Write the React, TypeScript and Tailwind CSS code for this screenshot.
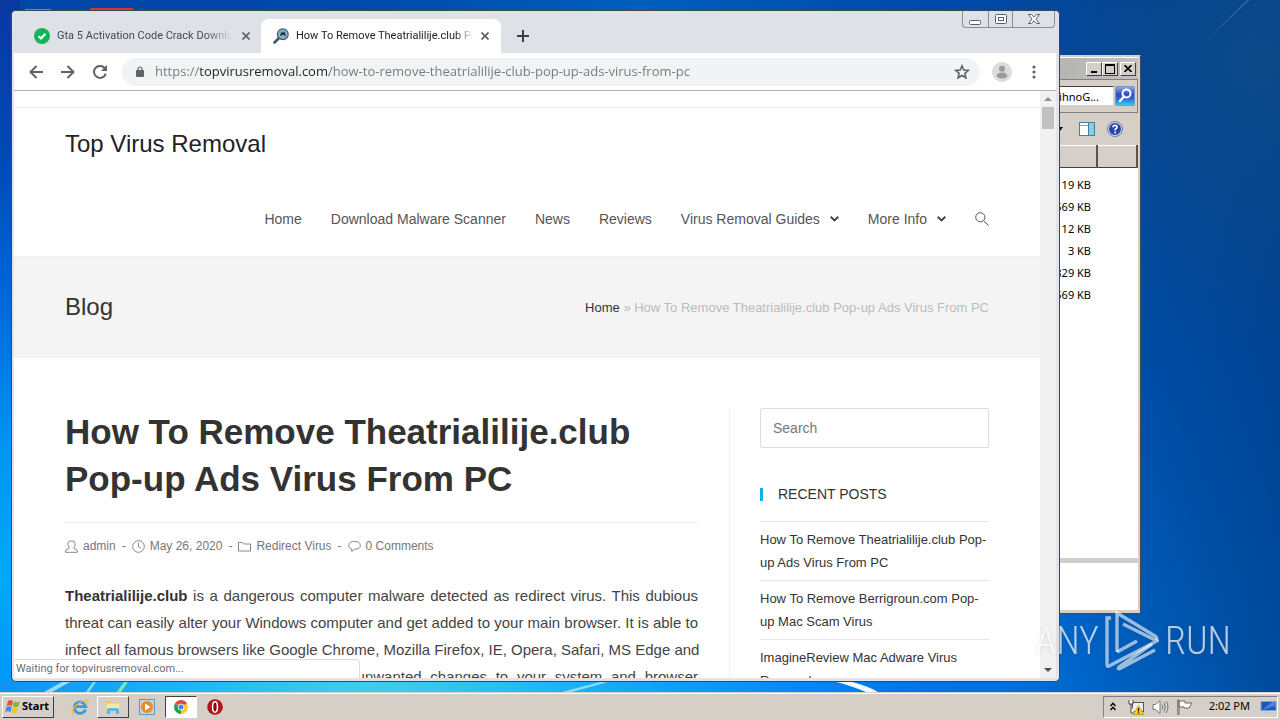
import type { ReactNode } from "react";

const navLinks = [
    { name: "Home", menu: false },
    { name: "Download Malware Scanner", menu: false },
    { name: "News", menu: false },
    { name: "Reviews", menu: false },
    { name: "Virus Removal Guides", menu: true },
    { name: "More Info", menu: true },
];

const recentPosts = [
    "How To Remove Theatrialilije.club Pop-up Ads Virus From PC",
    "How To Remove Berrigroun.com Pop-up Mac Scam Virus",
    "ImagineReview Mac Adware Virus Removal",
];

const fileSizes = ["119 KB", "569 KB", "12 KB", "3 KB", "829 KB", "569 KB"];

const raised = "border border-t-white border-l-white border-r-[#404040] border-b-[#404040] bg-[#d6cfc7]";

const CloseIcon = () => (
    <svg viewBox="0 0 8 8" className="size-2" stroke="#5f6368" strokeWidth="1.7">
        <path d="M0.5 0.5L7.5 7.5M7.5 0.5L0.5 7.5" />
    </svg>
);

const Wallpaper = () => (
    <svg className="absolute inset-0 size-full" viewBox="0 0 1280 720" preserveAspectRatio="none" aria-hidden="true">
        <defs>
            <linearGradient id="base" x1="0" y1="0" x2="0" y2="1">
                <stop offset="0" stopColor="#0046a6" />
                <stop offset="0.5" stopColor="#0057bd" />
                <stop offset="1" stopColor="#0074e2" />
            </linearGradient>
            <radialGradient id="glow" cx="370" cy="720" r="640" gradientUnits="userSpaceOnUse">
                <stop offset="0" stopColor="#46cff2" />
                <stop offset="0.3" stopColor="#1fb4f6" />
                <stop offset="0.7" stopColor="#0588f6" stopOpacity="0.9" />
                <stop offset="1" stopColor="#0070e0" stopOpacity="0" />
            </radialGradient>
            <radialGradient id="top" cx="640" cy="0" r="420" gradientUnits="userSpaceOnUse">
                <stop offset="0" stopColor="#0060bc" />
                <stop offset="1" stopColor="#0050b0" stopOpacity="0" />
            </radialGradient>
            <linearGradient id="left" x1="0" y1="0" x2="0" y2="1">
                <stop offset="0" stopColor="#0838a0" />
                <stop offset="0.25" stopColor="#004cb8" />
                <stop offset="0.42" stopColor="#0064d4" />
                <stop offset="0.65" stopColor="#0094f2" />
                <stop offset="0.85" stopColor="#00aaf8" />
                <stop offset="1" stopColor="#0098fa" />
            </linearGradient>
            <linearGradient id="shade" x1="1000" y1="0" x2="1280" y2="0" gradientUnits="userSpaceOnUse">
                <stop offset="0" stopColor="#003a78" stopOpacity="0" />
                <stop offset="1" stopColor="#003a80" stopOpacity="0.7" />
            </linearGradient>
            <radialGradient id="corner" cx="1260" cy="60" r="300" gradientUnits="userSpaceOnUse">
                <stop offset="0" stopColor="#0c4a88" stopOpacity="0.9" />
                <stop offset="1" stopColor="#0c4a88" stopOpacity="0" />
            </radialGradient>
        </defs>
        <rect width="1280" height="720" fill="url(#base)" />
        <rect width="1280" height="720" fill="url(#top)" />
        <rect width="1280" height="720" fill="url(#glow)" />
        <rect width="20" height="680" fill="url(#left)" />
        <rect width="1280" height="720" fill="url(#shade)" />
        <rect width="1280" height="720" fill="url(#corner)" />
        <path d="M1200 46L1245 2L1247 0L1250 0Z" fill="#5d92c6" opacity="0.35" />
        <path d="M44 692L62 682L70 682L52 692Z" fill="#b9ecff" opacity="0.8" />
        <path d="M86 692L93 682L96 682L89 692Z" fill="#b9ecff" opacity="0.7" />
        <path d="M117 692L124 682L128 682L121 692Z" fill="#9ef0b0" opacity="0.8" />
        <path d="M562 692L600 682L608 682L572 692Z" fill="#b9ecff" opacity="0.7" />
        <path d="M833 681L848 681Q866 685 878 692L866 692Q852 686 833 681Z" fill="#fff" opacity="0.95" />
        <rect x="25" y="9" width="26" height="2" fill="#5f8cc8" />
        <rect x="90" y="8" width="43" height="4" fill="#d9342b" />
    </svg>
);

const Magnifier = () => (
    <svg viewBox="0 0 20 20" className="size-5">
        <defs>
            <linearGradient id="lens" x1="0" y1="0" x2="0" y2="1">
                <stop offset="0" stopColor="#8fb0f0" />
                <stop offset="0.4" stopColor="#2b4fc4" />
                <stop offset="0.6" stopColor="#2a5fd0" />
                <stop offset="1" stopColor="#35d5f3" />
            </linearGradient>
        </defs>
        <rect x="0.5" y="0.5" width="19" height="19" rx="1" fill="url(#lens)" stroke="#7d97b8" />
        <circle cx="11.5" cy="7.5" r="4" fill="none" stroke="#fff" strokeWidth="2" />
        <path d="M9 10.5L5 15" stroke="#fff" strokeWidth="2.4" strokeLinecap="round" />
    </svg>
);

const ExplorerWindow = () => (
    <section
        aria-label="Explorer"
        className="absolute top-[55px] right-[139px] bottom-[106px] flex w-[400px] flex-col border border-t-[#d6cfc7] border-l-[#d6cfc7] border-r-[#404a58] border-b-[#404a58] bg-[#d6cfc7] p-px pr-[2px] pb-[3px] font-['Noto_Sans',sans-serif] text-[11px] text-black"
    >
        <div className="flex h-[22px] items-center justify-end border-t border-white bg-linear-to-r from-[#808080] to-[#c4c2c0] pr-0.5">
            <button aria-label="Minimize" className={`${raised} flex h-3.5 w-4 items-end justify-center pb-0.5`}>
                <span className="h-0.5 w-1.5 bg-black" />
            </button>
            <button aria-label="Maximize" className={`${raised} flex h-3.5 w-4 items-center justify-center`}>
                <span className="h-2.5 w-2.5 border border-t-2 border-black" />
            </button>
            <button aria-label="Close" className={`${raised} ml-0.5 flex h-3.5 w-4 items-center justify-center`}>
                <svg viewBox="0 0 8 7" className="h-[7px] w-2" stroke="#000" strokeWidth="1.6">
                    <path d="M0.5 0L7.5 7M7.5 0L0.5 7" />
                </svg>
            </button>
        </div>
        <div className="flex h-[34px] items-center justify-end border border-t-[#808080] border-r-[#808080] border-b-[#808080] pr-0.5">
            <input
                aria-label="Search folder"
                defaultValue="ihnoG..."
                className="h-5 w-[200px] border border-t-[#404040] border-l-[#808080] border-r-[#d6cfc7] border-b-[#d6cfc7] bg-white pr-3.5 text-right"
            />
            <button aria-label="Search" className="ml-px">
                <Magnifier />
            </button>
        </div>
        <div className="flex h-8 items-center justify-end gap-3 pr-[15px]">
            <svg viewBox="0 0 6 4" className="mr-1 h-1 w-1.5">
                <path d="M0 0H6L3 4Z" />
            </svg>
            <button aria-label="Preview pane">
                <svg viewBox="0 0 16 14" className="h-3.5 w-4">
                    <rect x="0.5" y="0.5" width="15" height="13" fill="#fff" stroke="#3f80a8" />
                    <path d="M1 3.5H10" stroke="#7aa8c8" />
                    <rect x="10" y="1" width="5" height="12" fill="#8fcbe2" />
                    <path d="M9.5 1V13" stroke="#3f80a8" />
                </svg>
            </button>
            <button aria-label="Help">
                <svg viewBox="0 0 16 16" className="size-4">
                    <circle cx="8" cy="8" r="7.5" fill="#cfd6ec" stroke="#6a7cb0" />
                    <circle cx="8" cy="8" r="6" fill="#2546a8" />
                    <path d="M6 6.3Q6 4.4 8 4.4T10 6.2Q10 7.3 8.2 8.2V9.4" fill="none" stroke="#fff" strokeWidth="1.6" />
                    <circle cx="8.2" cy="11.5" r="1" fill="#fff" />
                </svg>
            </button>
        </div>
        <div className="flex min-h-0 flex-1 flex-col bg-white">
            <table className="w-full border-collapse">
                <thead>
                    <tr className="h-[22px] bg-[#d6cfc7]">
                        <th aria-label="Size" className="border-t border-r-2 border-b border-t-white border-r-[#58544e] border-b-[#404040]" />
                        <th aria-label="Other" className="w-10 border-t border-r-2 border-b border-t-white border-r-[#58544e] border-b-[#404040]" />
                    </tr>
                </thead>
                <tbody className="before:block before:h-1.5">
                    {fileSizes.map((size, i) => (
                        <tr key={i} className="h-[22px]">
                            <td className="pr-1.5 text-right">{size}</td>
                            <td />
                        </tr>
                    ))}
                </tbody>
            </table>
        </div>
        <div className="h-[5px] bg-[#d0cec8]" />
        <div className="h-[47px] bg-white" />
    </section>
);

const TabStrip = () => (
    <div className="flex h-[42px] items-end bg-[#dee1e6] pl-[11px]">
        <div className="flex h-[34px] w-[238px] items-center pr-[7px] pl-[11px]">
            <svg viewBox="0 0 16 16" className="size-4 shrink-0">
                <circle cx="8" cy="8" r="8" fill="#12b559" />
                <path d="M4.6 8.2L7 10.4L11.4 5.8" fill="none" stroke="#fff" strokeWidth="2.2" />
            </svg>
            <button className="ml-[7px] min-w-0 flex-1 overflow-hidden mask-r-from-85% text-left whitespace-nowrap">
                Gta 5 Activation Code Crack Download
            </button>
            <button aria-label="Close tab" className="ml-1.5 p-1">
                <CloseIcon />
            </button>
        </div>
        <div className="flex h-[34px] w-[240px] items-center rounded-t-lg bg-white pr-2 pl-3">
            <svg viewBox="0 0 16 16" className="size-4 shrink-0">
                <path d="M1.5 14.5L6 10" stroke="#3c5666" strokeWidth="2.6" strokeLinecap="round" />
                <circle cx="9.8" cy="6.2" r="5.4" fill="#86b4c8" stroke="#40606f" strokeWidth="1.2" />
                <path d="M6.6 8.4L9 3.2L10 5L11.4 3.2L13 8.4L10 6.6Z" fill="#1d2f3b" />
            </svg>
            <button className="ml-[7px] min-w-0 flex-1 overflow-hidden mask-r-from-90% text-left whitespace-nowrap text-[#222]">
                How To Remove Theatrialilije.club Pop-up Ads
            </button>
            <button aria-label="Close tab" className="ml-1 p-1">
                <CloseIcon />
            </button>
        </div>
        <button aria-label="New tab" className="mb-[11px] ml-4">
            <svg viewBox="0 0 12 12" className="size-3" stroke="#3c4043" strokeWidth="2">
                <path d="M6 0V12M0 6H12" />
            </svg>
        </button>
        <div className="mr-1 ml-auto flex h-[17px] self-start rounded-b-sm border border-t-0 border-[#8b8e95] *:flex *:items-center *:justify-center">
            <button aria-label="Minimize window" className="w-[25px]">
                <svg viewBox="0 0 13 12" className="h-3 w-[13px]">
                    <rect x="0.5" y="7.5" width="11" height="4" rx="1" fill="#fff" stroke="#5c6068" />
                </svg>
            </button>
            <button aria-label="Maximize window" className="w-[25px] border-x border-[#8b8e95]">
                <svg viewBox="0 0 12 10" className="h-2.5 w-3" fill="#fff" stroke="#5c6068">
                    <rect x="0.5" y="0.5" width="11" height="9" rx="1" />
                    <rect x="3.5" y="3.5" width="5" height="3" />
                </svg>
            </button>
            <button aria-label="Close window" className="w-[41px]">
                <svg viewBox="0 0 12 10" className="h-2.5 w-3" fill="#fff" stroke="#5c6068">
                    <path d="M0.5 0.5H3.5L6 3.2L8.5 0.5H11.5L8 5L11.5 9.5H8.5L6 6.8L3.5 9.5H0.5L4 5Z" />
                </svg>
            </button>
        </div>
    </div>
);

const AddressBar = () => (
    <div className="flex h-[38px] items-center border-b border-[#b0b0b0] bg-white pr-5 pl-[15px]">
        <button aria-label="Back">
            <svg viewBox="0 0 14 14" className="size-3.5" fill="none" stroke="#5f6368" strokeWidth="2">
                <path d="M14 7H1.5M7.5 1L1.5 7L7.5 13" />
            </svg>
        </button>
        <button aria-label="Forward" className="ml-[18px]">
            <svg viewBox="0 0 14 14" className="size-3.5" fill="none" stroke="#5f6368" strokeWidth="2">
                <path d="M0 7H12.5M6.5 1L12.5 7L6.5 13" />
            </svg>
        </button>
        <button aria-label="Reload" className="ml-[18px]">
            <svg viewBox="0 0 14 14" className="size-3.5">
                <path d="M11.6 3A6 6 0 1 0 12.8 8.6" fill="none" stroke="#5f6368" strokeWidth="2" />
                <path d="M14 0V6H8Z" fill="#5f6368" />
            </svg>
        </button>
        <div className="ml-[15px] flex h-7 flex-1 items-center rounded-full bg-[#f1f3f4] pr-2.5 pl-3.5">
            <svg viewBox="0 0 8 11" className="h-[11px] w-2">
                <rect y="4" width="8" height="7" rx="1" fill="#5f6368" />
                <path d="M2 4.5V3A2 2 0 0 1 6 3V4.5" fill="none" stroke="#5f6368" strokeWidth="1.2" />
            </svg>
            <input
                aria-label="Address"
                defaultValue="https://topvirusremoval.com/how-to-remove-theatrialilije-club-pop-up-ads-virus-from-pc"
                className="ml-[11px] min-w-0 flex-1 bg-[linear-gradient(to_right,#74787c_44px,#202124_44px,#202124_174px,#74787c_174px)] bg-clip-text font-['Open_Sans',sans-serif] text-[13px] text-transparent outline-none"
            />
            <button aria-label="Bookmark">
                <svg viewBox="0 0 16 16" className="size-4" fill="none" stroke="#5f6368" strokeWidth="1.6">
                    <path d="M8 1.8L9.8 6L14.3 6.4L10.9 9.4L11.9 13.8L8 11.5L4.1 13.8L5.1 9.4L1.7 6.4L6.2 6Z" />
                </svg>
            </button>
        </div>
        <button aria-label="Profile" className="ml-3">
            <svg viewBox="0 0 20 20" className="size-5">
                <circle cx="10" cy="10" r="10" fill="#dcdcdc" />
                <circle cx="10" cy="6.8" r="3" fill="#9b9b9b" />
                <ellipse cx="10" cy="13.6" rx="5.4" ry="3" fill="#9b9b9b" />
            </svg>
        </button>
        <button aria-label="Menu" className="ml-5">
            <svg viewBox="0 0 4 14" className="h-3.5 w-1" fill="#5f6368">
                <circle cx="2" cy="2" r="1.6" />
                <circle cx="2" cy="7" r="1.6" />
                <circle cx="2" cy="12" r="1.6" />
            </svg>
        </button>
    </div>
);

const SiteHeader = () => (
    <header className="border-t border-[#f1f1f1] px-[51px] pb-0.5">
        <div className="flex h-[71px] items-center text-2xl text-[#222]">
            <a href="#top">Top Virus Removal</a>
        </div>
        <nav className="flex h-[75px] items-center justify-end gap-[29px] pt-1 text-sm text-[#555]">
            {navLinks.map((link) => (
                <a key={link.name} href="#nav" className="flex items-center gap-2.5 whitespace-nowrap">
                    {link.name}
                    {link.menu && (
                        <svg viewBox="0 0 9 6" className="h-1.5 w-[9px]" fill="none" stroke="#444" strokeWidth="2">
                            <path d="M0.7 0.8L4.5 4.4L8.3 0.8" />
                        </svg>
                    )}
                </a>
            ))}
            <button aria-label="Search site">
                <svg viewBox="0 0 14 14" className="size-3.5" fill="none" stroke="#555">
                    <circle cx="5.3" cy="5.3" r="4.6" />
                    <path d="M8.7 8.7L13.5 13.5" />
                </svg>
            </button>
        </nav>
    </header>
);

const Meta = ({ icon, children }: { icon: ReactNode; children: ReactNode }) => (
    <li className="flex items-center gap-[5px]">
        <svg viewBox="0 0 13 13" className="size-[13px]" fill="none" stroke="#888">
            {icon}
        </svg>
        {children}
    </li>
);

const Article = () => (
    <article className="min-w-0 flex-1 pr-[31px]">
        <h1 className="border-b border-[#eee] pb-5 text-[35px] leading-[47px] font-bold text-[#333]">
            How To Remove Theatrialilije.club Pop-up Ads Virus From PC
        </h1>
        <ul className="flex items-center gap-1.5 pt-[13px] text-xs leading-5 text-[#777]">
            <Meta icon={<path d="M4 7Q2.8 5.8 2.8 3.8Q2.8 0.8 6.5 0.8T10.2 3.8Q10.2 5.8 9 7V8.5L12.3 10V12.3H0.7V10L4 8.5Z" />}>admin</Meta>
            <li>-</li>
            <Meta
                icon={
                    <>
                        <circle cx="6.5" cy="6.5" r="5.8" />
                        <path d="M6.5 2.5V6.5L9 8.5" />
                    </>
                }
            >
                May 26, 2020
            </Meta>
            <li>-</li>
            <Meta icon={<path d="M0.5 2.5H4.5L5.8 4H12.5V11H0.5Z" />}>Redirect Virus</Meta>
            <li>-</li>
            <Meta icon={<path d="M6.5 1.5Q12.3 1.5 12.3 5.5T6.5 9.2L3.8 11.5V9Q0.7 8 0.7 5.5Q0.7 1.5 6.5 1.5Z" />}>0 Comments</Meta>
        </ul>
        <p className="pt-[26px] text-[15px] leading-[27px] text-[#444] *:block *:whitespace-nowrap [text-align-last:justify]">
            <span>
                <b className="text-[#333]">Theatrialilije.club</b> is a dangerous computer malware detected as redirect virus. This dubious
            </span>
            <span>threat can easily alter your Windows computer and get added to your main browser. It is able to</span>
            <span>infect all famous browsers like Google Chrome, Mozilla Firefox, IE, Opera, Safari, MS Edge and</span>
            <span>others. It can also make a lot of other unwanted changes to your system and browser</span>
        </p>
    </article>
);

const Sidebar = () => (
    <aside className="w-[260px] shrink-0 border-l border-[#f1f1f1] pl-[30px]">
        <input
            type="search"
            aria-label="Search"
            placeholder="Search"
            className="block h-10 w-full rounded-xs border border-[#ddd] px-3 text-sm placeholder:text-[#777]"
        />
        <h4 className="mt-10 flex h-[13px] items-center border-l-3 border-[#13aff0] pb-px pl-[15px] text-sm text-[#333]">RECENT POSTS</h4>
        <ul className="mt-5 text-[13px] leading-[23px] text-[#333]">
            {recentPosts.map((post) => (
                <li key={post} className="border-t border-[#e4e4e4] py-1.5">
                    <a href="#post">{post}</a>
                </li>
            ))}
        </ul>
    </aside>
);

const ChromeWindow = () => (
    <section
        aria-label="Browser"
        className="absolute top-[10px] right-[220px] bottom-[38px] left-[11px] flex flex-col overflow-hidden rounded-[5px] border border-[#3c4654] bg-[#e4e4e8] font-['Roboto',sans-serif] text-[11px] text-[#45494e]"
    >
        <TabStrip />
        <div className="mr-[3px] mb-[3px] ml-0.5 flex min-h-0 flex-1 flex-col">
            <AddressBar />
            <div className="relative flex min-h-0 flex-1 bg-white">
                <div className="min-w-0 flex-1 overflow-hidden pt-4 font-['Liberation_Sans',sans-serif]">
                    <SiteHeader />
                    <div className="flex h-[102px] items-center justify-between border-t border-[#eee] bg-[#f4f4f4] px-[51px]">
                        <h2 className="pb-0.5 text-2xl text-[#333]">Blog</h2>
                        <p className="text-[13px] text-[#bbb]">
                            <a href="#home" className="text-[#333]">
                                Home
                            </a>{" "}
                            » How To Remove Theatrialilije.club Pop-up Ads Virus From PC
                        </p>
                    </div>
                    <main className="flex px-[51px] pt-[50px]">
                        <Article />
                        <Sidebar />
                    </main>
                </div>
                <div className="flex w-4 flex-col items-center bg-[#f1f1f1] py-1.5">
                    <svg viewBox="0 0 8 4" className="h-1 w-2" fill="#8b8b8b">
                        <path d="M0 4L4 0L8 4Z" />
                    </svg>
                    <div className="mt-1.5 h-[22px] w-3 bg-[#c1c1c1]" />
                    <svg viewBox="0 0 8 4" className="mt-auto h-1 w-2" fill="#505050">
                        <path d="M0 0L4 4L8 0Z" />
                    </svg>
                </div>
                <div className="absolute bottom-0 left-0 flex h-[19px] w-[346px] items-center rounded-tr-sm border-t border-r border-[#dcdcdc] bg-white pl-0.5 text-[#6a6e72]">
                    Waiting for topvirusremoval.com...
                </div>
            </div>
        </div>
    </section>
);

const Watermark = () => (
    <div className="pointer-events-none absolute right-[49px] bottom-[48px] flex items-center gap-1.5 font-['Roboto_Condensed','Liberation_Sans_Narrow','Roboto',sans-serif] text-[38px] leading-none font-light text-white/70 drop-shadow-sm">
        <span>ANY</span>
        <svg viewBox="0 0 54 62" className="h-[62px] w-[54px] shrink-0" fill="none" stroke="#fff" strokeOpacity="0.6" strokeWidth="3.4">
            <path d="M6 8H2V54Q2 58 6 55L52 31L18 14" />
            <path d="M12 42V3L50 26Q53 28 51 30" />
            <path d="M12 42L32 31M47 34L14 57Q12 60 16 58L50 40" />
        </svg>
        <span>RUN</span>
    </div>
);

const Taskbar = () => (
    <footer className="relative flex h-7 items-center border-t border-[#d6cfc7] bg-[#d6cfc7] pr-0.5 pl-0.5 font-['Noto_Sans',sans-serif] text-[11px] text-black shadow-[inset_0_1px_0_#fff]">
        <button className={`${raised} flex h-[22px] w-[52px] items-center gap-px pl-0.5 font-bold`}>
            <svg viewBox="0 0 16 15" className="h-[15px] w-4 shrink-0">
                <path d="M3 2Q5.5 0.5 8 2L7 7Q4.5 5.5 1.8 7Z" fill="#e8542a" />
                <path d="M9 2.4Q11.5 4 14.6 2.4L13.4 7.4Q10.5 9 8 7.4Z" fill="#7ab83c" />
                <path d="M1.5 8Q4 6.6 6.8 8L5.6 13Q3 11.6 0.2 13Z" fill="#3c8fe0" />
                <path d="M7.8 8.4Q10.4 10 13.2 8.4L12 13.4Q9.4 15 6.6 13.4Z" fill="#f5c02c" />
            </svg>
            Start
        </button>
        <button aria-label="Internet Explorer" className="ml-[17px]">
            <svg viewBox="0 0 18 18" className="size-[18px]" fill="none">
                <path d="M14.5 11.5A5.7 5.7 0 1 1 14.7 8.6H4" stroke="#3a9ade" strokeWidth="2.8" />
                <path d="M2 16Q-0.5 13 5 7.5T16.5 2Q18 3 16 6.5" stroke="#f0b92c" strokeWidth="1.2" />
            </svg>
        </button>
        <button aria-label="File Explorer" className={`${raised} ml-2 flex h-[22px] w-8 items-center justify-center`}>
            <svg viewBox="0 0 16 16" className="size-4">
                <path d="M1 2H6L7 3.5H15V12H1Z" fill="#ecc763" />
                <path d="M1.5 4.5H14.5V12H1.5Z" fill="#fae9a4" />
                <path d="M2 15V11Q2 9 4 9H12Q14 9 14 11V15H11V12H5V15Z" fill="#5fb4e4" />
            </svg>
        </button>
        <button aria-label="Media Player" className="ml-[9px]">
            <svg viewBox="0 0 18 18" className="size-[18px]">
                <rect x="1.5" y="1.5" width="15" height="15" fill="#b8d8ee" stroke="#5c9ac8" />
                <circle cx="9" cy="9" r="6" fill="#f08a1c" />
                <path d="M7 5.5L12.5 9L7 12.5Z" fill="#fff" />
            </svg>
        </button>
        <button
            aria-label="Chrome"
            className="ml-[9px] flex h-[22px] w-8 items-center justify-center border border-t-[#404040] border-r-white border-b-white border-l-[#404040] bg-white"
        >
            <svg viewBox="0 0 14 14" className="size-3.5">
                <path d="M7 7L0.94 3.5A7 7 0 0 1 13.06 3.5Z" fill="#dd4b3e" />
                <path d="M7 7L13.06 3.5A7 7 0 0 1 7 14Z" fill="#fcc934" />
                <path d="M7 7L7 14A7 7 0 0 1 0.94 3.5Z" fill="#27a052" />
                <circle cx="7" cy="7" r="3.2" fill="#fff" />
                <circle cx="7" cy="7" r="2.5" fill="#4285e8" />
            </svg>
        </button>
        <button aria-label="Opera" className="ml-2.5">
            <svg viewBox="0 0 16 16" className="size-4">
                <circle cx="8" cy="8" r="7.8" fill="#b3141b" />
                <ellipse cx="8" cy="8" rx="2.4" ry="5.2" fill="#7c0a10" stroke="#fff" strokeWidth="1.5" />
            </svg>
        </button>
        <div className="ml-auto flex h-[22px] items-center border border-t-[#808080] border-r-white border-b-white border-l-[#808080] pl-1.5">
            <svg viewBox="0 0 6 9" className="h-[9px] w-1.5" fill="none" stroke="#000" strokeWidth="1.4">
                <path d="M0.5 4L3 1.2L5.5 4M0.5 8L3 5.2L5.5 8" />
            </svg>
            <svg viewBox="0 0 16 16" className="ml-3 size-4">
                <rect x="4.5" y="3.5" width="11" height="9" fill="#eee" stroke="#555" />
                <path d="M1 1V5H5V1M3 5V14H6" fill="#fff" stroke="#444" />
                <path d="M10.5 6.5L15.8 15.5H5.2Z" fill="#f7d117" stroke="#a8860c" strokeWidth="0.6" />
                <path d="M10.5 9V12.5M10.5 13.3V14.5" stroke="#222" strokeWidth="1.3" />
            </svg>
            <svg viewBox="0 0 17 16" className="ml-2 h-4 w-[17px]" fill="none" stroke="#777">
                <path d="M1 5.5H3.5L8 1.5V14.5L3.5 10.5H1Z" fill="#fff" />
                <path d="M10 5.5Q11.5 8 10 10.5M12 3.5Q14.5 8 12 12.5M14 2Q18 8 14 14" />
            </svg>
            <svg viewBox="0 0 16 16" className="ml-2 size-4" fill="#fff" stroke="#666">
                <path d="M2 15.5V1H0.8V15.5ZM2 2H8V4H15L13 7L12 9H7V8H2Z" />
            </svg>
            <span className="ml-4">2:02 PM</span>
            <button aria-label="Show desktop" className="ml-2.5">
                <svg viewBox="0 0 17 14" className="h-3.5 w-[17px]">
                    <path d="M1 1.5H16V10.5H1Z" fill="#1f56b8" stroke="#7ea4d8" />
                    <path d="M2 10L12 2H15V6Z" fill="#4a84dc" />
                    <path d="M6 12.5H14" stroke="#b8cbe6" strokeWidth="1.6" />
                </svg>
            </button>
        </div>
    </footer>
);

const App = () => {
    return (
        <div className="relative flex min-h-screen flex-col overflow-hidden">
            <Wallpaper />
            <div className="flex-1" />
            <ExplorerWindow />
            <ChromeWindow />
            <Watermark />
            <Taskbar />
        </div>
    );
};

export default App;
